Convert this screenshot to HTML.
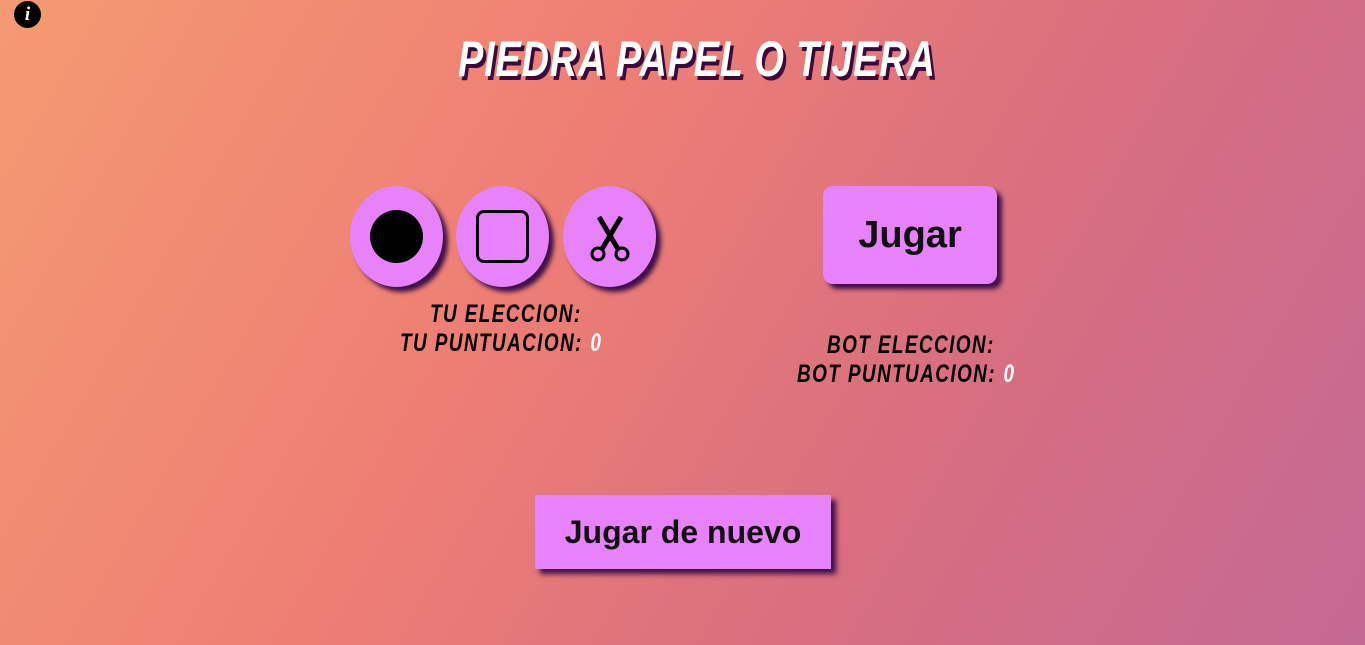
<!DOCTYPE html>
<html><head><meta charset="utf-8"><style>
html,body{margin:0;padding:0}
body{width:1365px;height:645px;overflow:hidden;position:relative;background:linear-gradient(120deg,#f49a72 0%,#ee7e74 38%,#d86e80 68%,#c46994 100%);font-family:"Liberation Sans",sans-serif}
.abs{position:absolute}
.t{position:absolute;white-space:nowrap;font-weight:bold;font-style:italic;transform-origin:0 0}
.l{font-size:25px;transform:scaleX(0.76);letter-spacing:1.8px}
.circ{position:absolute;width:93px;height:101px;border-radius:50%;background:#e882fa;box-shadow:5px 5px 5px #3f0f48;top:186px}
.btn{position:absolute;background:#e882fa;box-shadow:5px 5px 5px #3f0f48;display:flex;align-items:center;justify-content:center;font-weight:bold;color:#111}
.w{color:#fff;padding-left:10px}
</style></head><body>
<div class="abs" style="left:14px;top:1px;width:27px;height:27px;border-radius:50%;background:#000;color:#fff;font:italic bold 19px 'Liberation Serif',serif;text-align:center;line-height:27px">i</div>
<div class="t" style="left:458px;top:30px;font-size:50px;color:#fff;text-shadow:4px 4px 0 #3a0a3f;transform:scaleX(0.76);letter-spacing:1px">PIEDRA PAPEL O TIJERA</div>

<div class="circ" style="left:350px"><div class="abs" style="left:20px;top:24px;width:53px;height:53px;border-radius:50%;background:#000"></div></div>
<div class="circ" style="left:456px"><div class="abs" style="left:20px;top:24px;border:3px solid #000;border-radius:8px;box-sizing:border-box;width:53px;height:53px"></div></div>
<div class="circ" style="left:563px">
<svg class="abs" style="left:25px;top:27px" width="44" height="50" viewBox="0 0 44 50">
<g stroke="#000" fill="none">
<circle cx="10" cy="41" r="6" stroke-width="3"/><circle cx="34" cy="41" r="6" stroke-width="3"/>
<path d="M14 36 L33 4 M30 36 L11 4" stroke-width="5"/>
</g></svg></div>

<div class="t l" style="left:430px;top:300px">TU ELECCION:</div>
<div class="t l" style="left:400px;top:329px">TU PUNTUACION:<span class="w">0</span></div>

<div class="btn" style="left:823px;top:186px;width:174px;height:98px;border-radius:10px;font-size:38px">Jugar</div>

<div class="t l" style="left:827px;top:331px">BOT ELECCION:</div>
<div class="t l" style="left:797px;top:360px">BOT PUNTUACION:<span class="w">0</span></div>

<div class="btn" style="left:535px;top:495px;width:296px;height:74px;font-size:32px">Jugar de nuevo</div>
</body></html>
